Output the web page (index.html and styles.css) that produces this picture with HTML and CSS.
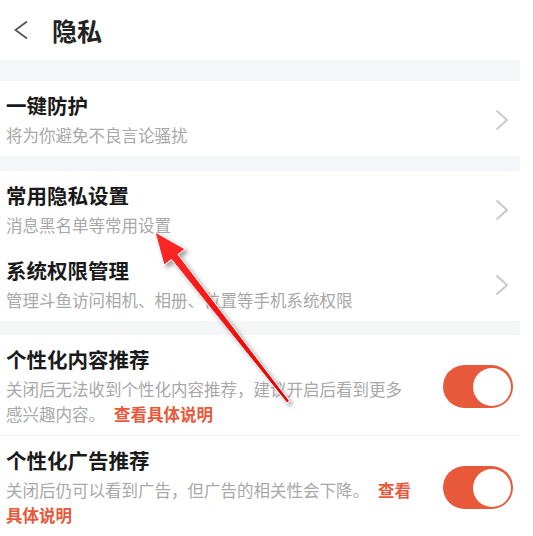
FILE: index.html
```html
<!DOCTYPE html>
<html lang="zh-CN">
<head>
<meta charset="UTF-8">
<title>隐私</title>
<link rel="stylesheet" href="styles.css">
</head>
<body>

<div class="page">
<div class="header">
<svg class="back" width="14" height="20" viewBox="0 0 14 20"><polyline points="13,1.5 1.5,10 13,18.5" fill="none" stroke="#555" stroke-width="1.8"/></svg>
<h1>隐私</h1>
</div>

<div class="group group-first">
<div class="item">
<div class="text">
<div class="title">一键防护</div>
<div class="sub">将为你避免不良言论骚扰</div>
</div>
<svg class="chev" width="14" height="22" viewBox="0 0 14 22"><polyline points="1.5,1.5 12,11 1.5,20.5" fill="none" stroke="#c9c9c9" stroke-width="2"/></svg>
</div>
</div>

<div class="group group-second">
<div class="item">
<div class="text">
<div class="title">常用隐私设置</div>
<div class="sub">消息黑名单等常用设置</div>
</div>
<svg class="chev" width="14" height="22" viewBox="0 0 14 22"><polyline points="1.5,1.5 12,11 1.5,20.5" fill="none" stroke="#c9c9c9" stroke-width="2"/></svg>
</div>
<div class="item">
<div class="text">
<div class="title">系统权限管理</div>
<div class="sub">管理斗鱼访问相机、相册、位置等手机系统权限</div>
</div>
<svg class="chev" width="14" height="22" viewBox="0 0 14 22"><polyline points="1.5,1.5 12,11 1.5,20.5" fill="none" stroke="#c9c9c9" stroke-width="2"/></svg>
</div>
</div>

<div class="group group-third">
<div class="item item-switch">
<div class="text text-wrap">
<div class="title">个性化内容推荐</div>
<div class="sub">关闭后无法收到个性化内容推荐，建议开启后看到更多感兴趣内容。<span class="more">查看具体说明</span></div>
</div>
<div class="toggle"><span class="knob"></span></div>
</div>
<div class="item item-switch">
<div class="text text-wrap">
<div class="title">个性化广告推荐</div>
<div class="sub">关闭后仍可以看到广告，但广告的相关性会下降。<span class="more">查看具体说明</span></div>
</div>
<div class="toggle"><span class="knob"></span></div>
</div>
</div>
</div>

<!-- annotation arrow drawn over the screenshot -->
<svg class="arrow" width="533" height="536" viewBox="0 0 533 536">
<defs>
<linearGradient id="red" x1="0" y1="0" x2="1" y2="1">
<stop offset="0" stop-color="#ff2a2a"/>
<stop offset="1" stop-color="#e60000"/>
</linearGradient>
<filter id="shadow" x="-20%" y="-20%" width="140%" height="140%">
<feDropShadow dx="3" dy="3" stdDeviation="2" flood-color="#555" flood-opacity="0.55"/>
</filter>
</defs>
<polygon points="155,232 164,265 171.5,259.5 287,403 289.5,401 178,254.5 185,249" fill="url(#red)" stroke="#fff" stroke-width="1" stroke-linejoin="round" filter="url(#shadow)"/>
</svg>

</body>
</html>
```

FILE: styles.css
```css
body {
	margin: 0;
	background-color: #fff;
	font-family: "Noto Sans CJK SC", "Noto Sans", sans-serif;
	color: #1a1a1a;
}

.page {
	width: 520px;
	background-color: #f5f6f8;
}

.header {
	height: 60px;
	background-color: #fff;
	display: flex;
	align-items: center;
	padding-left: 14px;
}

.header h1 {
	margin: 0 0 0 24px;
	font-size: 25px;
	font-weight: bold;
	color: #222;
	line-height: 30px;
}

.group {
	background-color: #fff;
}
.group-first {
	margin-top: 21px;
}
.group-second {
	margin-top: 15px;
}
.group-third {
	margin-top: 14px;
}

.item {
	display: flex;
	align-items: center;
	justify-content: space-between;
	padding: 11px 11px 8px 6px;
}

.item-switch {
	padding-right: 7px;
}
.item-switch + .item-switch {
	border-top: 1px solid #f0f0f0;
}

.title {
	font-size: 20.5px;
	font-weight: bold;
	line-height: 26px;
}

.sub {
	margin-top: 5px;
	font-size: 16.5px;
	line-height: 25px;
	color: #a8a8a8;
}

.text-wrap {
	width: 409px;
}

.more {
	margin-left: 9px;
	color: #e8583a;
	font-weight: bold;
}

.chev {
	display: block;
}

.toggle {
	width: 70px;
	height: 43px;
	border-radius: 22px;
	background-color: #e8583a;
	display: flex;
	align-items: center;
	justify-content: flex-end;
	padding-right: 2px;
	box-sizing: border-box;
}

.knob {
	width: 38px;
	height: 38px;
	border-radius: 50%;
	background-color: #fff;
}

.arrow {
	position: absolute;
	top: 0;
	left: 0;
	pointer-events: none;
}
```
